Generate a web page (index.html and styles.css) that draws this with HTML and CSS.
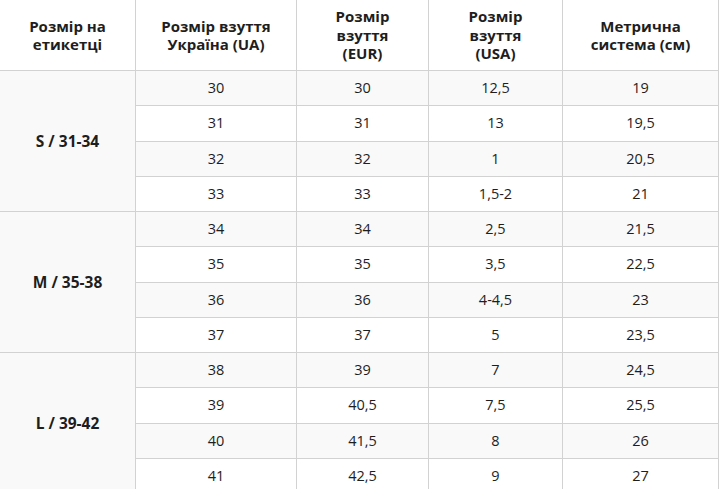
FILE: index.html
```html
<!DOCTYPE html>
<html lang="uk">
<head>
<meta charset="utf-8">
<link rel="stylesheet" href="styles.css">
</head>
<body>
<table class="sizes">
  <colgroup>
    <col class="c1"><col class="c2"><col class="c3"><col class="c4"><col class="c5">
  </colgroup>
  <thead>
    <tr>
      <th>Розмір на<br>етикетці</th>
      <th>Розмір взуття<br>Україна (UA)</th>
      <th>Розмір<br>взуття<br>(EUR)</th>
      <th>Розмір<br>взуття<br>(USA)</th>
      <th>Метрична<br>система (см)</th>
    </tr>
  </thead>
  <tbody>
    <tr class="odd"><td class="group" rowspan="4">S / 31-34</td><td>30</td><td>30</td><td>12,5</td><td>19</td></tr>
    <tr><td>31</td><td>31</td><td>13</td><td>19,5</td></tr>
    <tr class="odd"><td>32</td><td>32</td><td>1</td><td>20,5</td></tr>
    <tr><td>33</td><td>33</td><td>1,5-2</td><td>21</td></tr>
    <tr class="odd"><td class="group" rowspan="4">M / 35-38</td><td>34</td><td>34</td><td>2,5</td><td>21,5</td></tr>
    <tr><td>35</td><td>35</td><td>3,5</td><td>22,5</td></tr>
    <tr class="odd"><td>36</td><td>36</td><td>4-4,5</td><td>23</td></tr>
    <tr><td>37</td><td>37</td><td>5</td><td>23,5</td></tr>
    <tr class="odd"><td class="group" rowspan="4">L / 39-42</td><td>38</td><td>39</td><td>7</td><td>24,5</td></tr>
    <tr><td>39</td><td>40,5</td><td>7,5</td><td>25,5</td></tr>
    <tr class="odd"><td>40</td><td>41,5</td><td>8</td><td>26</td></tr>
    <tr><td>41</td><td>42,5</td><td>9</td><td>27</td></tr>
  </tbody>
</table>
</body>
</html>
```
FILE: styles.css
```css
html, body {
  margin: 0;
  padding: 0;
  background: #ffffff;
}
body {
  font-family: "Open Sans", "Noto Sans", sans-serif;
  color: #1e1e1e;
  overflow: hidden;
}
.sizes {
  border-collapse: collapse;
  table-layout: fixed;
  width: 719px;
  margin-left: -1px;
}
.sizes .c1 { width: 136px; }
.sizes .c2 { width: 161px; }
.sizes .c3 { width: 132px; }
.sizes .c4 { width: 134px; }
.sizes .c5 { width: 156px; }
.sizes th,
.sizes td {
  border: 1px solid #d2d2d2;
  text-align: center;
  vertical-align: middle;
  padding: 0 6px;
}
.sizes thead th {
  border-top: none;
  height: 70px;
  font-size: 15px;
  line-height: 18.5px;
  font-weight: 700;
}
.sizes tbody td {
  height: 34.25px;
  font-size: 14.5px;
  line-height: 18px;
}
.sizes tbody tr.odd td {
  background: #f9f9f9;
}
.sizes td.group {
  font-weight: 700;
  font-size: 15.5px;
}
```
